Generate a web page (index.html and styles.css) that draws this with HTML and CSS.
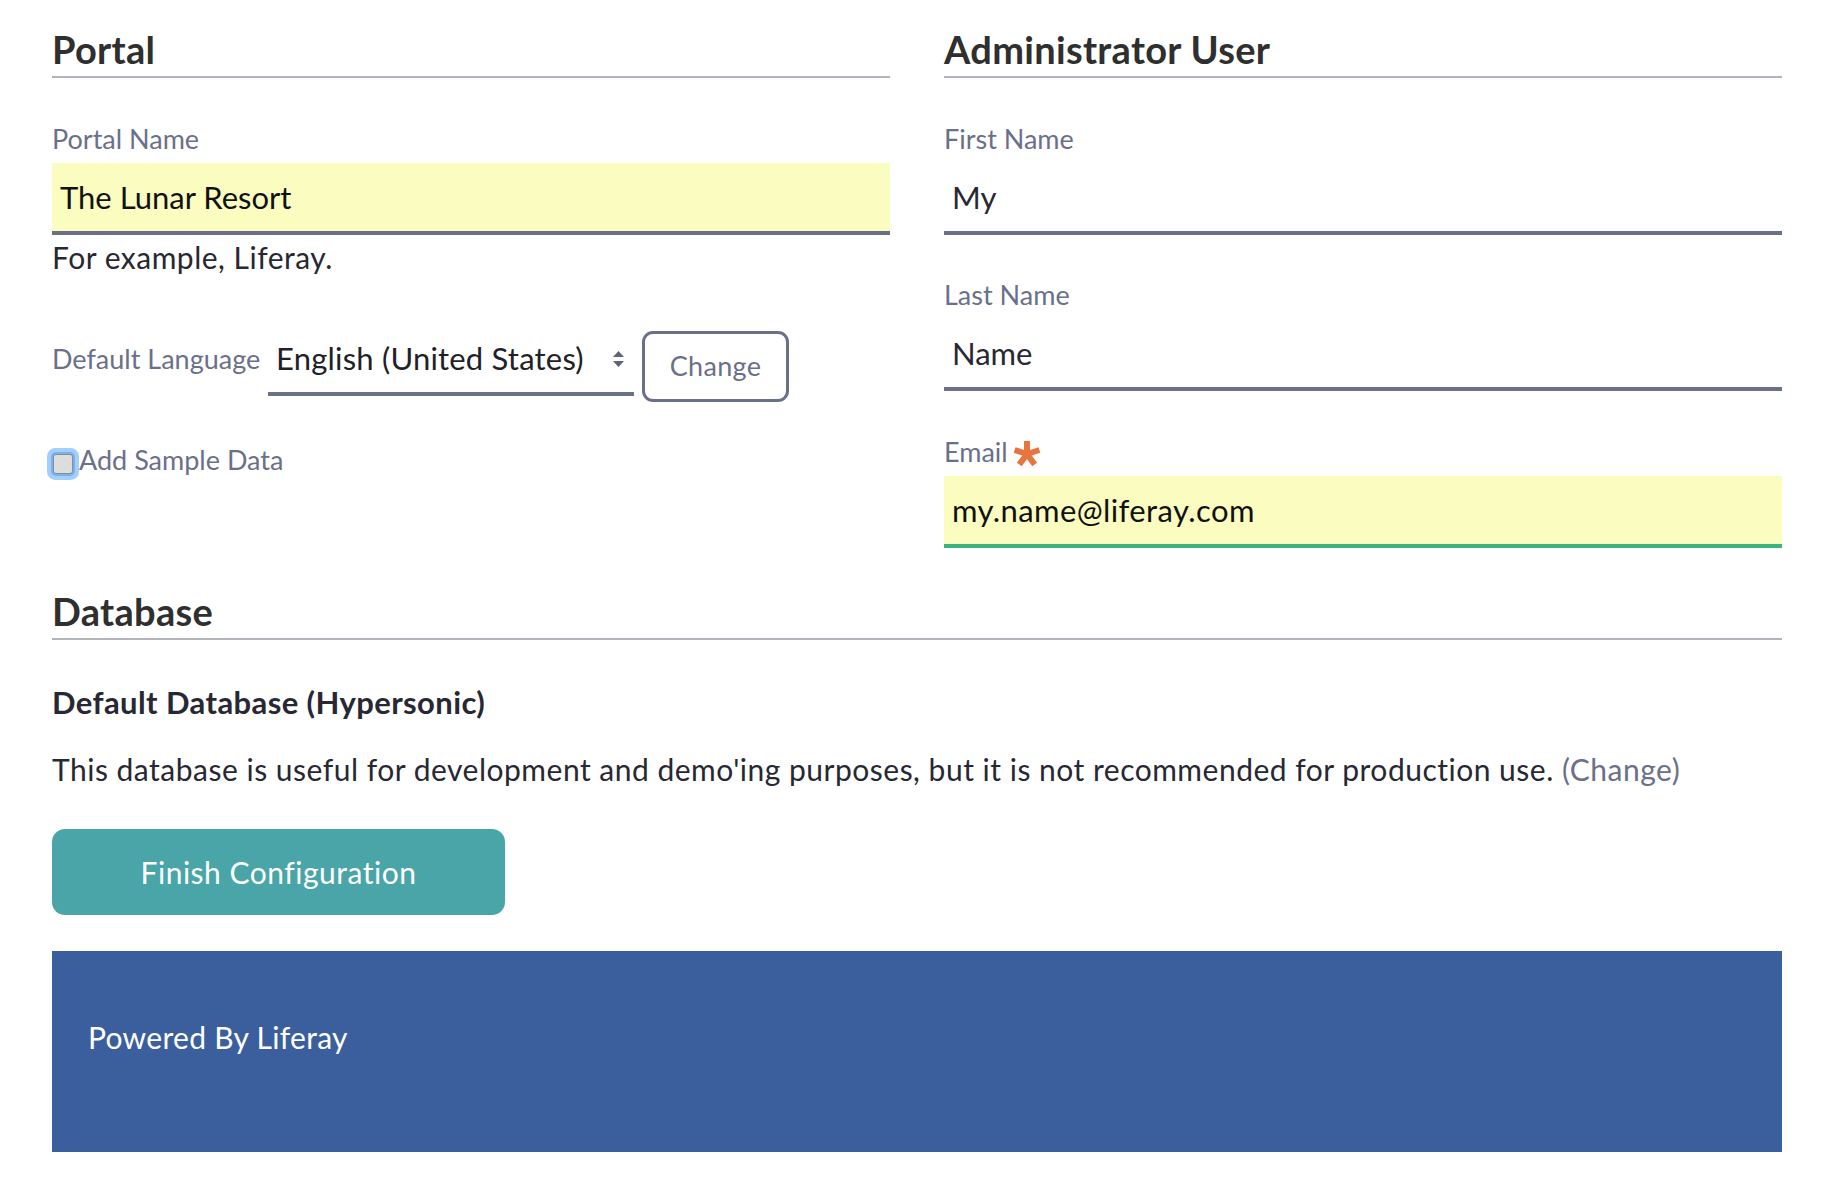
FILE: index.html
```html
<!DOCTYPE html>
<html lang="en">
<head>
<meta charset="utf-8">
<title>Basic Configuration</title>
<link rel="stylesheet" href="styles.css">
</head>
<body>
<div class="page">
  <div class="top-grid">
    <section class="col">
      <h2 class="section-title">Portal</h2>
      <div class="group group-help">
        <label class="field-label">Portal Name</label>
        <div class="field field-autofill">The Lunar Resort</div>
        <div class="help">For example, Liferay.</div>
      </div>
      <div class="lang-row">
        <span class="lang-label">Default Language</span>
        <div class="select">
          <span class="select-value">English (United States)</span>
          <svg class="select-arrow" width="13" height="17" viewBox="0 0 13 17"><path d="M6.5 0 L12 6 L1 6 Z M1 10 L12 10 L6.5 16 Z" fill="#5f6479"/></svg>
        </div>
        <button class="btn-outline">Change</button>
      </div>
      <label class="check-row">
        <span class="checkbox"></span>
        <span class="check-text">Add Sample Data</span>
      </label>
    </section>
    <section class="col">
      <h2 class="section-title">Administrator User</h2>
      <div class="group">
        <label class="field-label">First Name</label>
        <div class="field">My</div>
      </div>
      <div class="group">
        <label class="field-label">Last Name</label>
        <div class="field">Name</div>
      </div>
      <div class="group group-last">
        <label class="field-label">Email<svg class="req" width="30" height="28" viewBox="-15 -14 30 28"><g stroke="#e8743f" stroke-width="6"><line x1="0" y1="1" x2="0" y2="-13"/><line x1="0" y1="0" x2="12.4" y2="-4"/><line x1="0" y1="0" x2="7.7" y2="10.5"/><line x1="0" y1="0" x2="-7.7" y2="10.5"/><line x1="0" y1="0" x2="-12.4" y2="-4"/></g></svg></label>
        <div class="field field-autofill field-valid">my.name@liferay.com</div>
      </div>
    </section>
  </div>

  <section class="db">
    <h2 class="section-title">Database</h2>
    <h3 class="db-title">Default Database (Hypersonic)</h3>
    <p class="db-text">This database is useful for development and demo'ing purposes, but it is not recommended for production use. <a class="link" href="#">(Change)</a></p>
    <button class="btn-primary">Finish Configuration</button>
  </section>

  <footer class="footer">Powered By Liferay</footer>
</div>
</body>
</html>
```

FILE: styles.css
```css
* { box-sizing: border-box; }

html, body {
  margin: 0;
  padding: 0;
  background: #ffffff;
}

body {
  font-family: "Lato", "Noto Sans", sans-serif;
  color: #272833;
}

.page {
  width: 1730px;
  margin: 0 0 0 52px;
  padding-top: 27px;
}

.top-grid {
  display: grid;
  grid-template-columns: 1fr 1fr;
  column-gap: 54px;
}

.section-title {
  margin: 0 0 45px 0;
  font-size: 38px;
  line-height: 44px;
  font-weight: 700;
  letter-spacing: 0.3px;
  color: #2f2f2f;
  padding-bottom: 5px;
  border-bottom: 2px solid #b1b4ba;
}

.group {
  margin-bottom: 44px;
}

.group-last,
.group-help {
  margin-bottom: 0;
}

.field-label {
  display: flex;
  align-items: center;
  font-size: 27px;
  line-height: 32px;
  color: #6b708a;
  margin-bottom: 8px;
}

.req {
  margin-left: 4px;
  margin-top: 5px;
}

.field {
  height: 72px;
  padding: 0 8px;
  font-size: 31px;
  line-height: 68px;
  color: #272833;
  border-bottom: 4px solid #6b708a;
  background: #ffffff;
}

.field-autofill {
  background: #fafcc0;
  color: #111111;
}

.field-valid {
  border-bottom-color: #3bb37e;
  letter-spacing: 0.4px;
}

.help {
  margin-top: 5px;
  font-size: 30px;
  line-height: 34px;
  letter-spacing: 0.5px;
  color: #272833;
}

.lang-row {
  display: flex;
  align-items: flex-start;
  margin-top: 57px;
}

.lang-label {
  margin-top: 12px;
  width: 216px;
  font-size: 27px;
  line-height: 32px;
  color: #6b708a;
}

.select {
  display: flex;
  align-items: flex-start;
  width: 366px;
  margin-top: 7px;
  padding: 2px 9px 16px 8px;
  border-bottom: 4px solid #6b708a;
}

.select-value {
  font-size: 31px;
  line-height: 36px;
  letter-spacing: 0.2px;
  color: #1f2129;
}

.select-arrow {
  margin-left: auto;
  margin-top: 11px;
}

.btn-outline {
  margin-left: 8px;
  width: 147px;
  height: 71px;
  padding: 0 0 2px 0;
  font-family: "Lato", "Noto Sans", sans-serif;
  font-size: 27px;
  letter-spacing: 0.3px;
  color: #6b708a;
  background: #ffffff;
  border: 3px solid #6b708a;
  border-radius: 11px;
}

.check-row {
  display: flex;
  align-items: center;
  margin-top: 42px;
}

.checkbox {
  width: 20px;
  height: 20px;
  margin-left: 1px;
  margin-top: 7px;
  border: 1.5px solid #8c8c8c;
  border-radius: 3px;
  background: #dddddd;
  box-shadow: 0 0 0 2px #74b2f6, 0 0 0 6px #a4cefb;
}

.check-text {
  margin-left: 6px;
  font-size: 27px;
  line-height: 32px;
  color: #6b708a;
}

.db {
  margin-top: 41px;
}

.db-title {
  margin: 0;
  font-size: 31px;
  line-height: 34px;
  letter-spacing: 0.4px;
  font-weight: 700;
  color: #272833;
}

.db-text {
  margin: 33px 0 0 0;
  font-size: 30px;
  line-height: 34px;
  letter-spacing: 0.5px;
  color: #272833;
}

.link {
  color: #6b708a;
  text-decoration: none;
}

.btn-primary {
  display: block;
  margin-top: 43px;
  width: 453px;
  height: 86px;
  padding: 0;
  font-family: "Lato", "Noto Sans", sans-serif;
  font-size: 30px;
  letter-spacing: 0.5px;
  color: #ffffff;
  background: #4aa5a8;
  border: none;
  border-radius: 13px;
}

.footer {
  margin-top: 36px;
  height: 201px;
  padding: 69px 36px 0 36px;
  font-size: 30px;
  line-height: 34px;
  letter-spacing: 0.3px;
  color: #ffffff;
  background: #3a5f9c;
}
```
